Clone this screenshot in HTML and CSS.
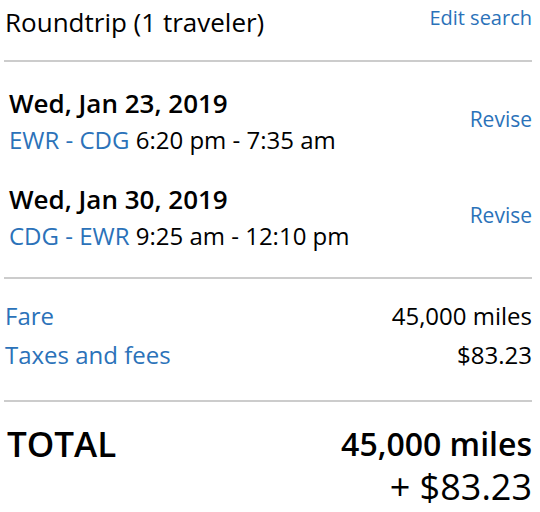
FILE: index.html
```html
<!DOCTYPE html>
<html>
<head>
<meta charset="utf-8">
<link rel="stylesheet" href="styles.css">
</head>
<body>
<div class="panel">
  <div class="head">
    <div class="title">Roundtrip (1 traveler)</div>
    <a class="link edit">Edit search</a>
  </div>
  <div class="rule"></div>
  <div class="flights">
    <div class="flight">
      <div class="info">
        <div class="date">Wed, Jan 23, 2019</div>
        <div class="route"><span class="blue">EWR - CDG</span> 6:20 pm - 7:35 am</div>
      </div>
      <a class="link revise">Revise</a>
    </div>
    <div class="flight">
      <div class="info">
        <div class="date">Wed, Jan 30, 2019</div>
        <div class="route"><span class="blue">CDG - EWR</span> 9:25 am - 12:10 pm</div>
      </div>
      <a class="link revise">Revise</a>
    </div>
  </div>
  <div class="rule"></div>
  <div class="costs">
    <div class="cost"><span class="blue">Fare</span><span>45,000 miles</span></div>
    <div class="cost"><span class="blue">Taxes and fees</span><span>$83.23</span></div>
  </div>
  <div class="rule"></div>
  <div class="total">
    <div class="total-label">TOTAL</div>
    <div class="total-value">
      <div class="miles">45,000 miles</div>
      <div class="cash">+ $83.23</div>
    </div>
  </div>
</div>
</body>
</html>
```
FILE: styles.css
```css
html, body {
  margin: 0;
  padding: 0;
  background: #fff;
}
body {
  font-family: "Open Sans", "Liberation Sans", sans-serif;
  color: #000;
}
.panel {
  width: 528px;
  margin-left: 4px;
}
.blue, .link {
  color: #2b72b9;
}
.head {
  display: flex;
  justify-content: space-between;
  align-items: flex-start;
  padding: 4px 0 0 1px;
  height: 56px;
}
.title {
  font-size: 26px;
  line-height: 36px;
}
.edit {
  font-size: 20px;
  line-height: 28px;
}
.rule {
  height: 2px;
  background: #cccccc;
}
.flights {
  padding: 23px 0 23px 5px;
}
.flight {
  display: flex;
  justify-content: space-between;
  align-items: center;
}
.flight + .flight {
  margin-top: 23px;
}
.date {
  font-size: 26px;
  font-weight: 600;
  line-height: 36px;
}
.route {
  font-size: 24px;
  line-height: 37px;
}
.revise {
  font-size: 21px;
  line-height: 28px;
  padding-bottom: 6px;
}
.costs {
  padding: 17px 0 26px 1px;
}
.cost {
  display: flex;
  justify-content: space-between;
  font-size: 24px;
  line-height: 39px;
}
.total {
  display: flex;
  justify-content: space-between;
  align-items: flex-start;
  padding: 19px 0 0 3px;
}
.total-label {
  font-size: 35px;
  font-weight: 600;
  line-height: 46px;
}
.total-value {
  text-align: right;
  padding-top: 1px;
}
.miles {
  font-size: 32px;
  font-weight: 600;
  line-height: 43px;
}
.cash {
  font-size: 36px;
  line-height: 43px;
}
```
